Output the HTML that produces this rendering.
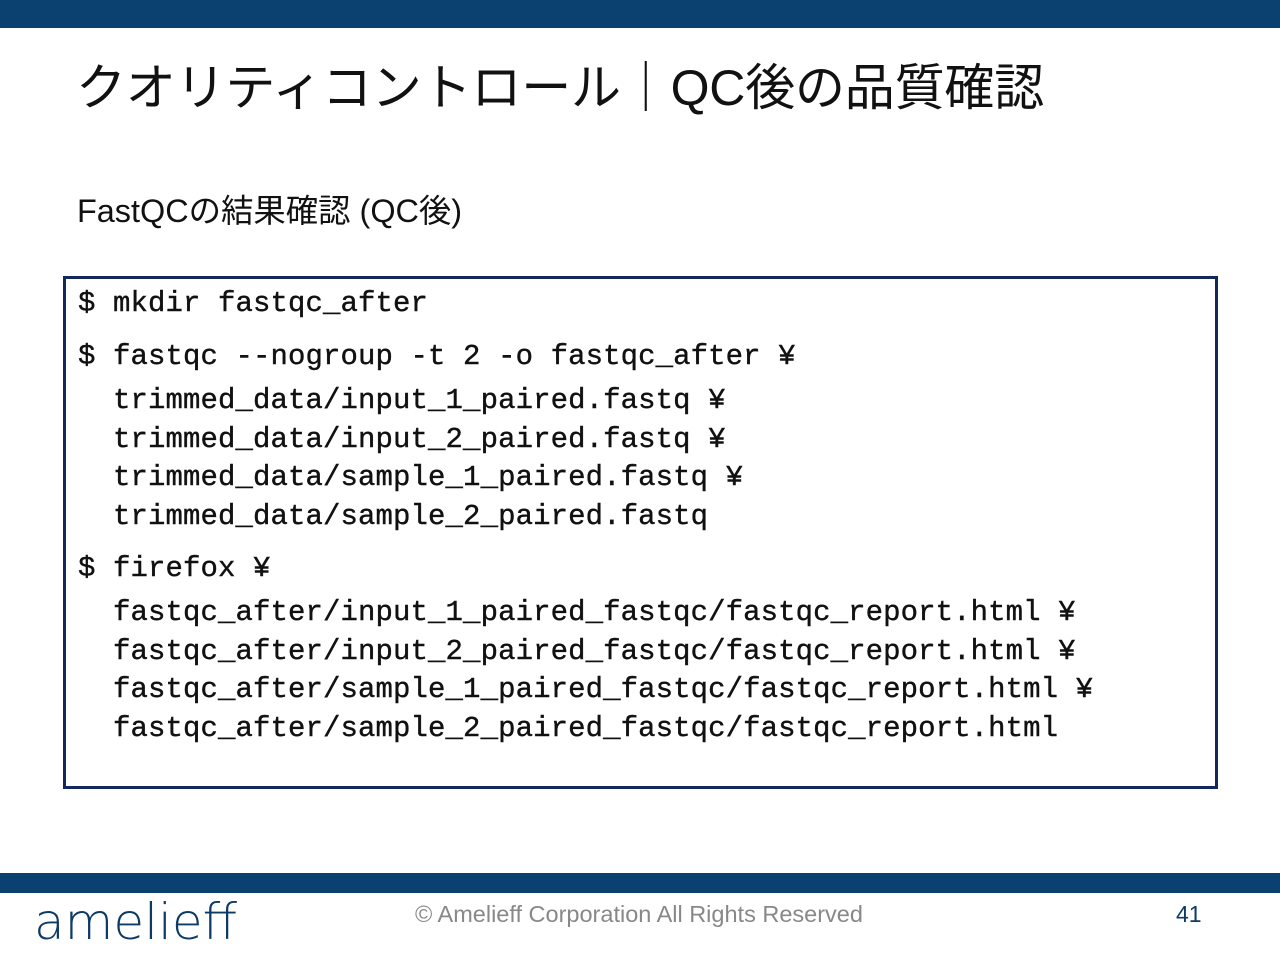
<!DOCTYPE html>
<html><head><meta charset="utf-8"><style>
body{margin:0;width:1280px;height:960px;position:relative;background:#fff;overflow:hidden;font-family:"Liberation Sans","Noto Sans CJK JP",sans-serif}
.bar{position:absolute;left:0;width:1280px;background:#0a4170}
.t{position:absolute;white-space:pre;color:#111}
.c{position:absolute;left:78px;white-space:pre;font-family:"Liberation Mono",monospace;font-size:29px;line-height:36px;height:36px;color:#111;letter-spacing:0.1px;-webkit-text-stroke:0.4px #111}
</style></head><body>
<div class="bar" style="top:0;height:28px"></div>
<div class="t" style="left:76px;top:58px;font-size:50px;line-height:60px;letter-spacing:-0.2px">クオリティコントロール｜QC後の品質確認</div>
<div class="t" style="left:77px;top:191px;font-size:32.4px;line-height:40px">FastQCの結果確認 (QC後)</div>
<div style="position:absolute;left:63px;top:276px;width:1149px;height:507px;border:3px solid #13295a"></div>
<div class="c" style="top:286px">$ mkdir fastqc_after</div>
<div class="c" style="top:339px">$ fastqc --nogroup -t 2 -o fastqc_after ¥</div>
<div class="c" style="top:383px">  trimmed_data/input_1_paired.fastq ¥</div>
<div class="c" style="top:422px">  trimmed_data/input_2_paired.fastq ¥</div>
<div class="c" style="top:460px">  trimmed_data/sample_1_paired.fastq ¥</div>
<div class="c" style="top:499px">  trimmed_data/sample_2_paired.fastq</div>
<div class="c" style="top:551px">$ firefox ¥</div>
<div class="c" style="top:595px">  fastqc_after/input_1_paired_fastqc/fastqc_report.html ¥</div>
<div class="c" style="top:634px">  fastqc_after/input_2_paired_fastqc/fastqc_report.html ¥</div>
<div class="c" style="top:672px">  fastqc_after/sample_1_paired_fastqc/fastqc_report.html ¥</div>
<div class="c" style="top:711px">  fastqc_after/sample_2_paired_fastqc/fastqc_report.html</div>
<div class="bar" style="top:873px;height:20px"></div>
<div class="t" style="left:34px;top:892px;font-size:50px;line-height:60px;color:#0d3a66;font-family:'DejaVu Sans',sans-serif;font-weight:300;letter-spacing:0px">amelieff</div>
<div class="t" style="left:415px;top:900px;font-size:23.5px;line-height:28px;color:#888">© Amelieff Corporation All Rights Reserved</div>
<div class="t" style="left:1176px;top:900px;font-size:23px;line-height:28px;color:#0d3a66">41</div>
</body></html>
